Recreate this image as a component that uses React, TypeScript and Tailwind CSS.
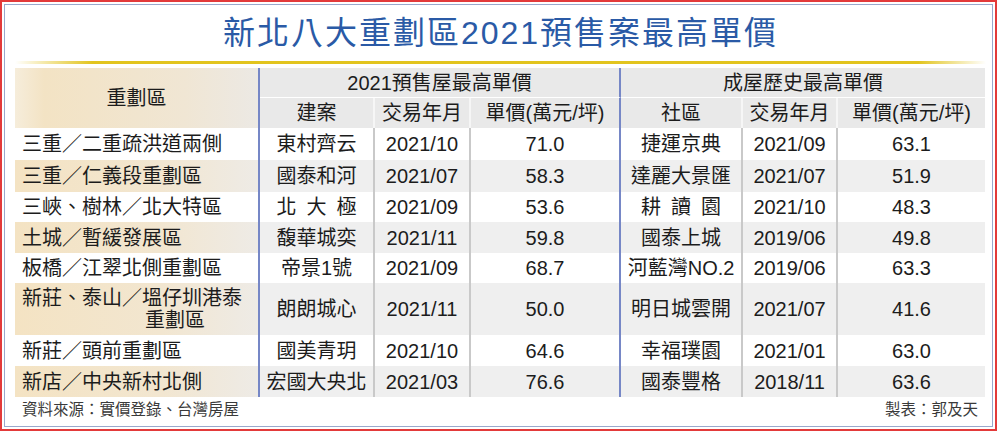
type Row = {
  area: string
  area2?: string
  p: string
  pSpaced?: boolean
  pd: string
  pp: string
  h: string
  hSpaced?: boolean
  hd: string
  hp: string
  height: string
}

const rows: Row[] = [
  { area: '三重／二重疏洪道兩側', p: '東村齊云', pd: '2021/10', pp: '71.0', h: '捷運京典', hd: '2021/09', hp: '63.1', height: 'h-[32px]' },
  { area: '三重／仁義段重劃區', p: '國泰和河', pd: '2021/07', pp: '58.3', h: '達麗大景匯', hd: '2021/07', hp: '51.9', height: 'h-[32px]' },
  { area: '三峽、樹林／北大特區', p: '北大極', pSpaced: true, pd: '2021/09', pp: '53.6', h: '耕讀園', hSpaced: true, hd: '2021/10', hp: '48.3', height: 'h-[30px]' },
  { area: '土城／暫緩發展區', p: '馥華城奕', pd: '2021/11', pp: '59.8', h: '國泰上城', hd: '2019/06', hp: '49.8', height: 'h-[31px]' },
  { area: '板橋／江翠北側重劃區', p: '帝景1號', pd: '2021/09', pp: '68.7', h: '河藍灣NO.2', hd: '2019/06', hp: '63.3', height: 'h-[30px]' },
  { area: '新莊、泰山／塭仔圳港泰', area2: '重劃區', p: '朗朗城心', pd: '2021/11', pp: '50.0', h: '明日城雲開', hd: '2021/07', hp: '41.6', height: 'h-[52px]' },
  { area: '新莊／頭前重劃區', p: '國美青玥', pd: '2021/10', pp: '64.6', h: '幸福璞園', hd: '2021/01', hp: '63.0', height: 'h-[31px]' },
  { area: '新店／中央新村北側', p: '宏國大央北', pd: '2021/03', pp: '76.6', h: '國泰豐格', hd: '2018/11', hp: '63.6', height: 'h-[31px]' },
]

function Spaced({ text, on }: { text: string; on?: boolean }) {
  if (!on) return <>{text}</>
  return <span className="tracking-[10px] mr-[-10px]">{text}</span>
}

export default function App() {
  return (
    <div className="w-[997px] h-[431px] border-2 border-[#e33a3a] p-[2px] bg-white font-['Liberation_Sans','Noto_Sans_CJK_TC',sans-serif] text-[#1c1c1c]">
      <div className="h-full border border-[#9aa8cc] pl-[10px] pr-[6px] pt-[8px]">
        <h1 className="h-[40px] leading-[40px] text-center text-[32px] tracking-[2px] font-normal text-[#2a5aa6]">
          新北八大重劃區2021預售案最高單價
        </h1>
        <div className="mt-[8px] h-[3px] bg-[linear-gradient(to_right,#ffffff_0%,#e2c41e_8%,#e2c41e_93%,#ffffff_100%)]" />

        <table className="mt-[4px] w-[970px] table-fixed border-separate border-spacing-0 text-[20px]">
          <colgroup>
            <col className="w-[245px]" />
            <col className="w-[115px]" />
            <col className="w-[96px]" />
            <col className="w-[150px]" />
            <col className="w-[122px]" />
            <col className="w-[95px]" />
            <col className="w-[147px]" />
          </colgroup>
          <thead>
            <tr className="h-[30px] leading-[24px]">
              <th
                rowSpan={2}
                className="border-r-2 border-r-[#7687c6] bg-[linear-gradient(to_right,#f6eddb_0%,#f3e3c4_12%,#f0e6d4_70%,#ece9e4_100%)] font-normal"
              >
                重劃區
              </th>
              <th colSpan={3} className="bg-[#e9e9e9] border-b border-b-white border-r-2 border-r-[#7687c6] font-normal">
                2021預售屋最高單價
              </th>
              <th colSpan={3} className="bg-[#e9e9e9] border-b border-b-white font-normal">
                成屋歷史最高單價
              </th>
            </tr>
            <tr className="h-[30px] leading-[24px] bg-[#e9e9e9]">
              <th className="border-r-2 border-r-[#f6f6f6] font-normal">建案</th>
              <th className="border-r-2 border-r-[#f6f6f6] font-normal">交易年月</th>
              <th className="border-r-2 border-r-[#7687c6] font-normal">單價(萬元/坪)</th>
              <th className="border-r-2 border-r-[#f6f6f6] font-normal">社區</th>
              <th className="border-r-2 border-r-[#f6f6f6] font-normal">交易年月</th>
              <th className="font-normal">單價(萬元/坪)</th>
            </tr>
          </thead>
          <tbody>
            {rows.map((r, i) => {
              const tint = i % 2 === 1
              const cell = tint ? 'bg-[#efefef]' : 'bg-white'
              return (
                <tr key={r.area} className={`${r.height} leading-[22px] text-center`}>
                  <td
                    className={`pl-[7px] text-left border-r-2 border-r-[#7687c6] ${
                      tint ? 'bg-[linear-gradient(to_right,#f4e3c3_0%,#f2e6d0_60%,#eeebe6_100%)]' : 'bg-white'
                    }`}
                  >
                    <div>{r.area}</div>
                    {r.area2 && <div className="pl-[123px]">{r.area2}</div>}
                  </td>
                  <td className={`${cell} border-r-2 border-r-[#c9c9c9]`}>
                    <Spaced text={r.p} on={r.pSpaced} />
                  </td>
                  <td className={`${cell} border-r-2 border-r-[#c9c9c9]`}>{r.pd}</td>
                  <td className={`${cell} border-r-2 border-r-[#7687c6]`}>{r.pp}</td>
                  <td className={`${cell} border-r-2 border-r-[#c9c9c9]`}>
                    <Spaced text={r.h} on={r.hSpaced} />
                  </td>
                  <td className={`${cell} border-r-2 border-r-[#c9c9c9]`}>{r.hd}</td>
                  <td className={cell}>{r.hp}</td>
                </tr>
              )
            })}
          </tbody>
        </table>

        <div className="mt-[2px] w-[970px] flex justify-between px-[7px] leading-[22px] text-[15.5px] text-[#3a3a3a]">
          <span>資料來源：實價登錄、台灣房屋</span>
          <span>製表：郭及天</span>
        </div>
      </div>
    </div>
  )
}
